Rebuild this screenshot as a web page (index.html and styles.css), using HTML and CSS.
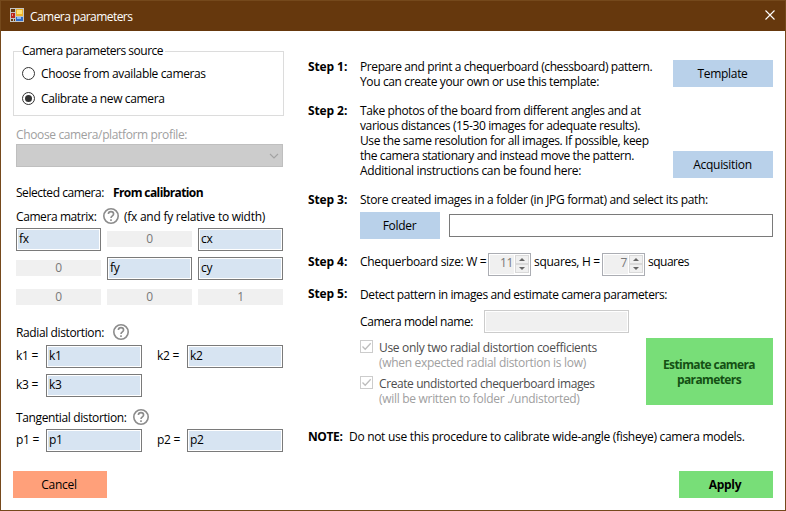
FILE: index.html
```html
<!DOCTYPE html>
<html lang="en">
<head>
<meta charset="utf-8">
<title>Camera parameters</title>
<link rel="stylesheet" href="styles.css">
</head>
<body>
<div class="window">
  <header class="titlebar">
    <svg class="app-icon" width="14" height="14" viewBox="0 0 14 14" shape-rendering="crispEdges">
      <rect width="14" height="14" fill="#c4c4c4"/>
      <rect x="1" y="1" width="4" height="3" fill="#66380d"/>
      <rect x="1" y="5" width="4" height="5" fill="#b8261c"/>
      <rect x="2" y="6" width="1" height="2" fill="#f08a80"/>
      <rect x="1" y="11" width="4" height="2" fill="#66380d"/>
      <rect x="3" y="10" width="1" height="3" fill="#c4c4c4"/>
      <rect x="6" y="1" width="7" height="7" fill="#efb52a"/>
      <rect x="7" y="2" width="5" height="4" fill="#fde27a"/>
      <rect x="6" y="9" width="7" height="4" fill="#2f6cc9"/>
      <rect x="7" y="9" width="4" height="2" fill="#8cbcf5"/>
    </svg>
    <span class="title">Camera parameters</span>
    <svg class="close" width="10" height="10" viewBox="0 0 10 10"><path d="M.5 .5l9 9M9.5 .5l-9 9" stroke="#fff" stroke-width="1.1"/></svg>
  </header>
  <main class="content">
    <section class="left">
      <fieldset class="source">
        <legend>Camera parameters source</legend>
        <label class="radio"><svg width="13" height="13" viewBox="0 0 13 13"><circle cx="6.5" cy="6.5" r="6" fill="#fff" stroke="#333"/></svg><span>Choose from available cameras</span></label>
        <label class="radio"><svg width="13" height="13" viewBox="0 0 13 13"><circle cx="6.5" cy="6.5" r="6" fill="#fff" stroke="#333"/><circle cx="6.5" cy="6.5" r="3.5" fill="#333"/></svg><span>Calibrate a new camera</span></label>
      </fieldset>
      <div class="form">
        <div class="profile-label">Choose camera/platform profile:</div>
        <div class="select"><svg width="10" height="6" viewBox="0 0 10 6"><path d="M1 1l4 4 4-4" fill="none" stroke="#a2a2a2" stroke-width="1.1"/></svg></div>
        <div class="selected"><span>Selected camera:</span><b>From calibration</b></div>
        <div class="matrix-head"><span class="tight">Camera matrix:</span><svg class="help" width="16" height="16" viewBox="0 0 16 16"><circle cx="8" cy="8" r="7.2"/><path d="M5.4 6c0-3.2 5.2-3.2 5.2 0 0 1.8-2.6 1.8-2.6 4M8 11.2v1.7"/></svg><span class="loose">(fx and fy relative to width)</span></div>
        <div class="matrix">
          <div class="input">fx</div><div class="fixed">0</div><div class="input">cx</div>
          <div class="fixed">0</div><div class="input">fy</div><div class="input">cy</div>
          <div class="fixed">0</div><div class="fixed">0</div><div class="fixed">1</div>
        </div>
        <div class="group-head radial"><span>Radial distortion:</span><svg class="help" width="16" height="16" viewBox="0 0 16 16"><circle cx="8" cy="8" r="7.2"/><path d="M5.4 6c0-3.2 5.2-3.2 5.2 0 0 1.8-2.6 1.8-2.6 4M8 11.2v1.7"/></svg></div>
        <div class="coeffs">
          <span>k1 =</span><div class="input">k1</div><span>k2 =</span><div class="input">k2</div>
          <span>k3 =</span><div class="input">k3</div>
        </div>
        <div class="group-head tangential"><span>Tangential distortion:</span><svg class="help" width="16" height="16" viewBox="0 0 16 16"><circle cx="8" cy="8" r="7.2"/><path d="M5.4 6c0-3.2 5.2-3.2 5.2 0 0 1.8-2.6 1.8-2.6 4M8 11.2v1.7"/></svg></div>
        <div class="coeffs pair">
          <span>p1 =</span><div class="input">p1</div><span>p2 =</span><div class="input">p2</div>
        </div>
      </div>
    </section>
    <section class="right">
      <div class="step step1">
        <b>Step 1:</b>
        <p><span class="tight">Prepare and print a chequerboard (chessboard) pattern.</span><span>You can create your own or use this template:</span></p>
        <div class="button">Template</div>
      </div>
      <div class="step step2">
        <b>Step 2:</b>
        <p><span>Take photos of the board from different angles and at</span><span>various distances (15-30 images for adequate results).</span><span>Use the same resolution for all images. If possible, keep</span><span class="tight">the camera stationary and instead move the pattern.</span><span class="normal">Additional instructions can be found here:</span></p>
        <div class="button">Acquisition</div>
      </div>
      <div class="step step3">
        <b>Step 3:</b>
        <div class="body">
          <p><span class="normal">Store created images in a folder (in JPG format) and select its path:</span></p>
          <div class="folder-row"><div class="button folder">Folder</div><div class="path"></div></div>
        </div>
      </div>
      <div class="step step4">
        <b>Step 4:</b>
        <div class="size-row">
          <span class="w-label">Chequerboard size: W =</span>
          <div class="spinner"><span>11</span><div class="arrows"><i class="up"></i><i class="down"></i></div></div>
          <span class="h-label">squares, H =</span>
          <div class="spinner"><span>7</span><div class="arrows"><i class="up"></i><i class="down"></i></div></div>
          <span class="sq-label">squares</span>
        </div>
      </div>
      <div class="step step5">
        <b>Step 5:</b>
        <div class="body">
          <p><span class="tight">Detect pattern in images and estimate camera parameters:</span></p>
          <div class="model-row"><span class="tight">Camera model name:</span><div class="model"></div></div>
          <div class="options-row">
            <div class="options">
              <div class="option"><svg width="13" height="13" viewBox="0 0 13 13"><rect x=".5" y=".5" width="12" height="12" fill="#fff" stroke="#ccc"/><path d="M2.5 6.5l2.7 2.8 5.5-6" fill="none" stroke="#bdbdbd" stroke-width="1.3"/></svg><div><span>Use only two radial distortion coefficients</span><small>(when expected radial distortion is low)</small></div></div>
              <div class="option"><svg width="13" height="13" viewBox="0 0 13 13"><rect x=".5" y=".5" width="12" height="12" fill="#fff" stroke="#ccc"/><path d="M2.5 6.5l2.7 2.8 5.5-6" fill="none" stroke="#bdbdbd" stroke-width="1.3"/></svg><div><span class="tight">Create undistorted chequerboard images</span><small>(will be written to folder ./undistorted)</small></div></div>
            </div>
            <div class="button estimate">Estimate camera<br>parameters</div>
          </div>
        </div>
      </div>
      <div class="note"><b>NOTE:</b><span>Do not use this procedure to calibrate wide-angle (fisheye) camera models.</span></div>
    </section>
  </main>
  <footer class="actions"><div class="button cancel">Cancel</div><div class="button apply">Apply</div></footer>
</div>
</body>
</html>
```
FILE: styles.css
```css
* { box-sizing: border-box; }
body { margin: 0; font: 12px/15px "Open Sans", "Noto Sans", sans-serif; letter-spacing: -0.3px; color: #000; white-space: nowrap; }
p { margin: 0; letter-spacing: -0.38px; }
p > span { display: block; }
svg { display: block; flex: none; }
.window { width: 786px; height: 511px; border: 1px solid #75491c; background: #fff; display: flex; flex-direction: column; }
.titlebar { height: 30px; background: #66380d; color: #fff; display: flex; align-items: center; padding: 0 10px 0 9px; flex: none; }
.app-icon { margin-bottom: 2px; }
.title { margin-left: 6px; letter-spacing: -0.56px; }
.close { margin-left: auto; margin-bottom: 2px; }
.content { height: 440px; display: flex; padding: 0 12px; }
.left { width: 271px; margin-right: 24px; padding-top: 12px; }
.source { margin: 0; border: 1px solid #dcdcdc; padding: 7px 8px 0; height: 73px; min-width: 0; }
.source legend { padding: 0 2px 1px 0; letter-spacing: -0.48px; }
.radio { display: flex; align-items: center; gap: 6px; height: 15px; margin-bottom: 10px; letter-spacing: -0.36px; }
.form { padding: 11px 1px 0 3px; }
.profile-label { color: #a0a0a0; letter-spacing: -0.36px; }
.select { height: 23px; margin-top: 2px; background: #ccc; border: 1px solid #bfbfbf; display: flex; align-items: center; justify-content: flex-end; padding-right: 3px; }
.selected { display: flex; margin-top: 18px; letter-spacing: -0.46px; }
.selected span { width: 97px; }
.selected b { letter-spacing: -0.6px; }
.matrix-head { display: flex; align-items: center; height: 16px; margin-top: 8px; }
.matrix-head span { padding-top: 1px; }
.matrix-head span:first-child { width: 87px; }
.matrix-head .help { margin-right: 5px; }
.help { fill: none; stroke: #8c8c8c; stroke-width: 1.6; }
.matrix { display: grid; grid-template-columns: repeat(3, 85px); grid-auto-rows: 23px; gap: 6px; margin-top: 4px; align-items: start; }
.input { height: 23px; border: 1px solid #7a7a7a; background: #d7e4f2; box-shadow: inset 0 0 0 1px #fff; padding: 2px; }
.fixed { height: 16px; margin-top: 3px; background: #f0f0f0; color: #787878; text-align: center; }
.group-head { display: flex; align-items: center; height: 16px; }
.group-head span { padding-top: 1px; width: 97px; letter-spacing: -0.38px; }
.radial { margin-top: 15px; }
.tangential { margin-top: 12px; }
.tangential span { width: 117px; }
.coeffs { display: grid; grid-template-columns: 30px 111px 30px 96px; grid-auto-rows: 23px; row-gap: 6px; margin-top: 5px; }
.pair { margin-top: 4px; }
.coeffs > span { padding-top: 3px; }
.coeffs .input { width: 96px; }
.right { width: 465px; }
.step { display: flex; align-items: flex-start; }
.step > b { width: 52px; flex: none; letter-spacing: -0.1px; }
.step > .body { flex: 1; }
.button { background: #b9d1ea; width: 100px; height: 27px; display: flex; align-items: center; justify-content: center; text-align: center; padding-right: 1px; flex: none; }
.step > .button { margin-left: auto; }
.step1 { margin-top: 28px; height: 44px; }
.step1 .button { margin-top: 1px; }
.step2 { height: 89px; }
.step2 .button { margin-top: 48px; }
.folder-row { display: flex; align-items: center; gap: 9px; margin-top: 5px; }
.folder { width: 80px; }
.path { flex: 1; height: 23px; border: 1px solid #7a7a7a; }
.step4 { margin-top: 14px; height: 23px; }
.step4 > b { padding-top: 1px; }
.size-row { display: flex; }
.size-row > span { padding-top: 1px; }
.w-label { width: 128px; }
.spinner { width: 43px; height: 23px; border: 1px solid #abadb3; background: #f0f0f0; box-shadow: inset 0 0 0 1px #fff; display: flex; justify-content: flex-end; color: #787878; padding: 1px; }
.spinner > span { padding-right: 1px; }
.arrows { width: 15px; background: #fff; display: grid; grid-template-rows: 9px 9px; padding-left: 1px; }
.arrows i { border: 1px solid #d9d9d9; background: #f0f0f0; display: flex; align-items: center; justify-content: center; }
.arrows i::before { content: ""; border: 3px solid transparent; }
.arrows .up::before { border-bottom-color: #666; border-top: 0; }
.arrows .down::before { border-top-color: #666; border-bottom: 0; }
.h-label { width: 71px; padding-left: 3px; }
.size-row .sq-label { padding-left: 3px; letter-spacing: -0.5px; }
.step5 { margin-top: 11px; height: 134px; }
.step5 > b { margin-top: -1px; }
.model-row { display: flex; align-items: center; height: 23px; margin-top: 8px; }
.model-row span { width: 124px; }
.model { width: 145px; height: 23px; background: #f0f0f0; border: 1px solid #ccc; box-shadow: inset 0 0 0 1px #fff; }
.options-row { display: flex; justify-content: space-between; margin-top: 5px; }
.options { padding-top: 2px; }
.option { display: flex; gap: 6px; height: 36px; color: #4d4d4d; }
.option span, .option small { display: block; }
.option small { font-size: 12px; color: #a0a0a0; letter-spacing: -0.3px; }
.estimate { width: 127px; height: 67px; background: #78de78; color: #145014; font-weight: 700; letter-spacing: -0.6px; }
.note { display: flex; margin-top: 8px; letter-spacing: -0.3px; }
.note b { width: 41px; letter-spacing: -0.4px; }
.actions { display: flex; justify-content: space-between; padding: 0 12px; }
.actions .button { width: 94px; letter-spacing: -0.3px; padding-right: 2px; }
.actions .cancel { background: #ffa07a; }
.actions .apply { background: #78de78; font-weight: 700; }
.tight { letter-spacing: -0.41px; }
.normal { letter-spacing: -0.32px; }
.loose { letter-spacing: -0.26px; }
```
